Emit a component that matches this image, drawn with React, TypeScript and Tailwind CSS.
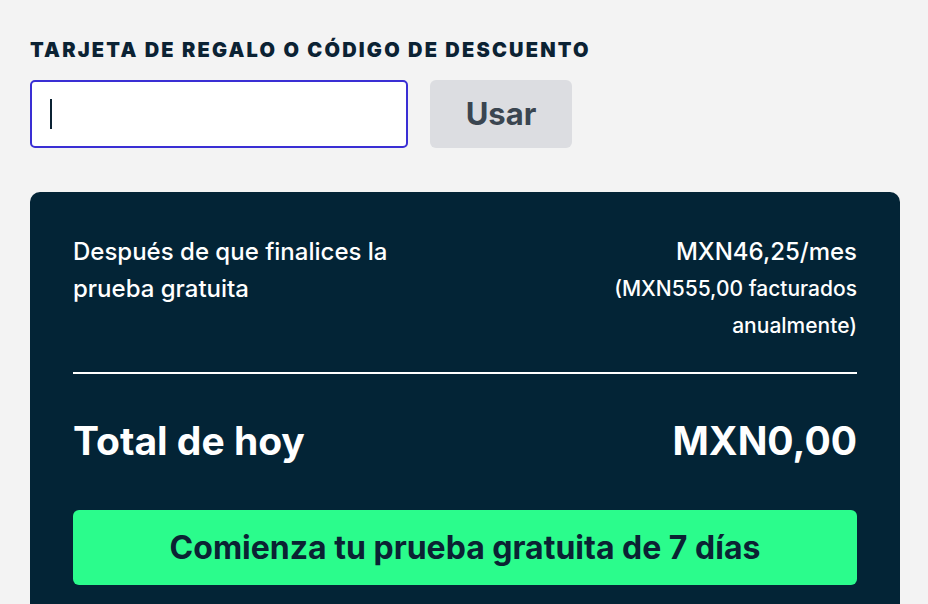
import React from 'react';

export default function App() {
    return (
        <div className="min-h-screen bg-[#f3f3f3] pl-[30px] pt-[38px] font-['Inter','Noto_Sans',sans-serif] text-[#0b2233]">
            <div className="w-[870px]">
                <label className="block text-[20px] font-black uppercase tracking-[0.11em] leading-[24px] text-[#0b2233]">
                    Tarjeta de regalo o código de descuento
                </label>
                <div className="mt-[18px] flex items-center gap-[22px]">
                    <div className="flex h-[68px] w-[378px] items-center rounded-[5px] border-2 border-[#3a2fd4] bg-white pl-[18px]">
                        <span className="block h-[30px] w-[2px] bg-[#0b2233]"></span>
                    </div>
                    <button className="h-[68px] w-[142px] rounded-[6px] bg-[#dcdde1] text-[31px] font-bold text-[#3a4550]">
                        Usar
                    </button>
                </div>

                <div className="mt-[44px] rounded-t-[10px] bg-[#032436] px-[43px] pt-[41px] pb-[30px] text-white">
                    <div className="flex justify-between">
                        <p className="w-[360px] text-[24px] font-medium leading-[37px]">
                            Después de que finalices la prueba gratuita
                        </p>
                        <div className="text-right font-medium leading-[37px]">
                            <p className="text-[24px]">MXN46,25/mes</p>
                            <p className="w-[290px] text-[21px]">(MXN555,00 facturados anualmente)</p>
                        </div>
                    </div>
                    <div className="mt-[28px] h-[2px] bg-white"></div>
                    <div className="mt-[45px] flex items-center justify-between text-[39px] font-bold leading-[44px]">
                        <span>Total de hoy</span>
                        <span>MXN0,00</span>
                    </div>
                    <button className="mt-[47px] h-[75px] w-full rounded-[6px] bg-[#2bfc8c] text-[32px] font-bold text-[#0b2233]">
                        Comienza tu prueba gratuita de 7 días
                    </button>
                </div>
            </div>
        </div>
    );
}
